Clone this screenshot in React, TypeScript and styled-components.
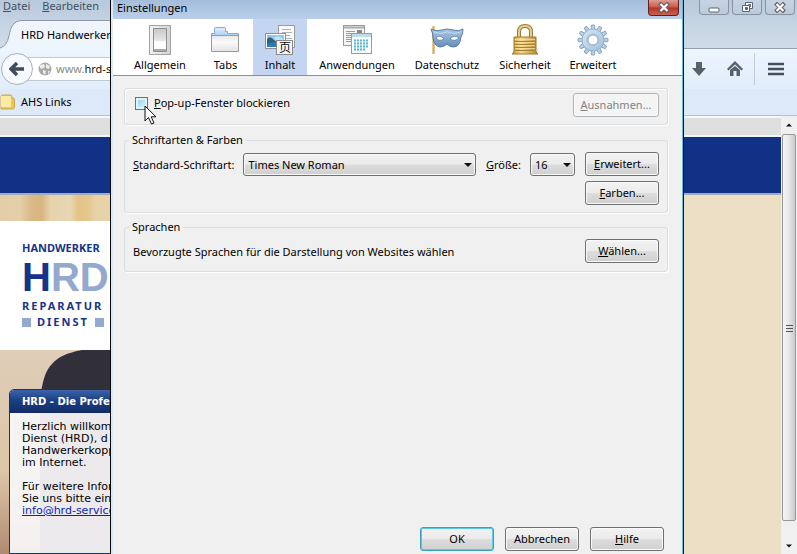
import React from "react";
import styled, { createGlobalStyle } from "styled-components";

const Global = createGlobalStyle`
  * { box-sizing: border-box; }
  html, body, #root { height: 100%; margin: 0; }
  body { overflow: hidden; font: 11px/16px "Noto Sans", "Open Sans", sans-serif; color: #000; }
  button, input, select { font: inherit; color: inherit; }
`;

/* ---------- browser window ---------- */

const Browser = styled.div`
  position: relative;
  display: flex;
  flex-direction: column;
  height: 100vh;
  overflow: hidden;
  background: #dce9f8;
`;

const TitleBar = styled.header`
  display: flex;
  flex-direction: column;
  justify-content: space-between;
  height: 49px;
  background: linear-gradient(#b7c9dc, #c8d6e4 60%, #cfdbe7);
  border-bottom: 1px solid #93a1b1;
`;

const MenuRow = styled.div`
  display: flex;
  justify-content: space-between;
  align-items: flex-start;
  height: 16px;
  padding: 0 2px 0 3px;
`;

const Menu = styled.nav`
  display: flex;
  gap: 12px;
`;

const MenuItem = styled.button`
  padding: 0;
  border: 0;
  background: none;
  line-height: 12px;
  color: #44505e;
`;

const WindowButtons = styled.div`
  display: flex;
  gap: 3px;
`;

const WindowButton = styled.button`
  display: grid;
  place-items: center;
  width: 30px;
  height: 15px;
  padding: 0;
  border: 1px solid #8793a3;
  border-top: 0;
  border-radius: 0 0 4px 4px;
  background: linear-gradient(#c5d3e2, #bccbdc);
`;

const Tab = styled.div`
  display: flex;
  align-items: flex-end;
  height: 29px;
  margin-bottom: -1px;
`;

const TabTitle = styled.span`
  width: 180px;
  height: 29px;
  border-top: 1px solid #8c99a8;
  background: linear-gradient(#f0f5fb, #ecf4fd);
  line-height: 28px;
`;

const NavBar = styled.div`
  display: flex;
  align-items: center;
  height: 40px;
  padding-right: 13px;
  background: linear-gradient(#edf5fd, #e1edfa);
`;

const BackButton = styled.button`
  z-index: 1;
  display: grid;
  place-items: center;
  width: 32px;
  height: 32px;
  margin-left: 1px;
  padding: 0;
  border: 1px solid #a6b2c1;
  border-radius: 50%;
  background: #f6f9fd;
`;

const Address = styled.label`
  display: flex;
  flex: 1;
  align-items: center;
  gap: 4px;
  height: 24px;
  margin: 0 160px 0 -8px;
  padding-left: 12px;
  border: 1px solid #c0cad6;
  background: #fff;
  color: #8a8a8a;
  b { color: #111; font-weight: 400; }
`;

const NavIcons = styled.div`
  display: flex;
  align-items: center;
  gap: 20px;
`;

const NavButton = styled.button`
  display: grid;
  padding: 0;
  border: 0;
  background: none;
`;

const Divider = styled.span`
  width: 1px;
  height: 32px;
  margin: 0 -7px 0 -9px;
  background: #bccadb;
`;

const Bookmarks = styled.div`
  display: flex;
  align-items: center;
  height: 27px;
  border-bottom: 1px solid #b3c0d0;
  background: #dde9f8;
`;

const BookmarkLink = styled.a`
  display: flex;
  align-items: center;
  gap: 6px;
  color: inherit;
  text-decoration: none;
`;

const Viewport = styled.div`
  display: flex;
  flex: 1;
  min-height: 0;
`;

const Site = styled.main`
  display: flex;
  flex: 1;
  flex-direction: column;
  overflow: hidden;
  background: #eddfc5;
`;

const Strip = styled.div`
  height: 21px;
  border-top: 2px solid #f6f7f8;
  border-bottom: 2px solid #f4f5f6;
  background: #dedede;
`;

const Banner = styled.div`
  height: 58px;
  border-bottom: 2px solid #a8a9b8;
  background: #113187;
`;

const SideColumn = styled.section`
  display: flex;
  flex: 1;
  flex-direction: column;
  width: 50%;
  min-height: 0;
`;

const Curtain = styled.div`
  height: 26px;
  background: linear-gradient(90deg, #e2cda7 0, #e3cfaa 20px, #d9b886 32px, #d8b682 42px, #e6d2ac 50px, #e8d7b5 70px, #e3c387 78px, #e5c78f 88px, #e8d2a8 96px, #ead7b0);
`;

const LogoPanel = styled.div`
  display: flex;
  flex-direction: column;
  align-items: flex-start;
  height: 129px;
  padding: 19px 0 0 22px;
  background: #fff;
  color: #16338a;
  font-weight: 700;
`;

const LogoWord = styled.span<{ $tracking: number }>`
  display: flex;
  align-items: center;
  gap: 6px;
  line-height: 16px;
  letter-spacing: ${(p) => p.$tracking}px;
`;

const LogoMark = styled.strong`
  font-family: "Liberation Sans", sans-serif;
  font-size: 40px;
  line-height: 42px;
  span { color: #93a9cd; }
`;

const LogoSquare = styled.i`
  width: 9px;
  height: 9px;
  background: #93a9cd;
`;

const Photo = styled.div`
  display: grid;
  flex: 1;
  min-height: 0;
  overflow: hidden;
  > * { grid-area: 1 / 1; }
`;

const InfoBox = styled.article`
  margin: 39px 0 0 9px;
  border: 1px solid #17336f;
  border-radius: 5px 5px 0 0;
  overflow: hidden;
  background: rgba(248, 247, 248, 0.94);
  font: 11px/12px "DejaVu Sans", sans-serif;
`;

const InfoTitle = styled.h2`
  margin: 0;
  padding: 0 12px;
  background: linear-gradient(#3c64a8, #1d3f83 45%, #122c66);
  color: #fff;
  font-size: 10px;
  line-height: 23px;
`;

const InfoText = styled.p`
  margin: 0 12px 12px;
  &:first-of-type { margin-top: 8px; }
  a { color: #0b1fc4; }
`;

const ScrollBar = styled.div`
  display: flex;
  flex-direction: column;
  align-items: center;
  width: 16px;
  padding: 1px 0 0;
  background: #f0f0f1;
`;

const ScrollArrow = styled.button`
  display: grid;
  place-items: center;
  width: 16px;
  height: 16px;
  padding: 0;
  border: 0;
  background: none;
`;

const Thumb = styled.div`
  display: grid;
  flex: 1;
  place-items: center;
  width: 14px;
  margin: 1px 0 17px;
  border: 1px solid #979797;
  border-radius: 2px;
  background: linear-gradient(90deg, #f5f5f5, #e8e8ea 45%, #c9cacd);
`;

/* ---------- settings dialog ---------- */

const Dialog = styled.div`
  position: absolute;
  z-index: 2;
  top: 0;
  right: 113px;
  bottom: 0;
  left: 110px;
  display: flex;
  flex-direction: column;
  border: solid #05080c;
  border-width: 0 1px;
  background: #f0f0f0;
  box-shadow: inset 2px 0 #dfe8f3, inset -1px 0 #55c3dc;
  padding: 0 1px 0 2px;
`;

const DialogTitle = styled.div`
  display: flex;
  justify-content: space-between;
  height: 19px;
  padding: 0 3px 0 4px;
  background: linear-gradient(#a4bddb, #b9cee8);
  h1 { margin: 0; font-size: 11px; font-weight: 400; line-height: 16px; }
`;

const CloseButton = styled.button`
  display: grid;
  place-items: center;
  width: 31px;
  height: 16px;
  padding: 0;
  border: 1px solid #5f1f22;
  border-top: 0;
  border-radius: 0 0 4px 4px;
  background: linear-gradient(#dd9c91, #c9594a 48%, #b63323 52%, #cd6350);
`;

const Categories = styled.nav`
  display: grid;
  grid-template-columns: 76px 55px 54px 100px 80px 76px 60px;
  height: 57px;
  padding-left: 9px;
  border-bottom: 1px solid #8c8f94;
  background: #fff;
`;

const Category = styled.button<{ $active?: boolean }>`
  display: flex;
  flex-direction: column;
  align-items: center;
  gap: 1px;
  padding: 5px 0 0;
  border: 0;
  background: ${(p) => (p.$active ? "#c4d5f1" : "transparent")};
  white-space: nowrap;
  svg { flex: none; }
`;

const Panel = styled.form`
  display: flex;
  flex: 1;
  flex-direction: column;
  padding: 12px 14px 3px 11px;
`;

const Group = styled.fieldset`
  display: flex;
  justify-content: space-between;
  gap: 10px;
  min-width: 0;
  margin: 0 0 6px;
  padding: 4px 8px 7px;
  border: 1px solid #d8dde1;
  border-radius: 3px;
  box-shadow: 1px 1px #fff;
  legend { padding: 0 3px; margin-left: -4px; }
`;

const PlainGroup = styled(Group)`
  margin-bottom: 7px;
  padding: 4px 8px 7px 10px;
  box-shadow: inset 1px 1px #fff, 1px 1px #fff;
`;

const CheckLabel = styled.label`
  position: relative;
  display: flex;
  align-items: center;
  gap: 6px;
  height: 20px;
`;

const Check = styled.input`
  appearance: none;
  width: 13px;
  height: 13px;
  margin: 0;
  border: 1px solid #3c7fb1;
  background: linear-gradient(135deg, #8fcfea, #e8f7fd);
  box-shadow: inset 0 0 0 2px #dff3fb;
`;

const Pointer = styled.svg`
  position: absolute;
  top: 12px;
  left: 9px;
`;

const Fields = styled.div`
  display: flex;
  flex: 1;
  align-items: center;
  gap: 9px;
  height: 25px;
`;

const Picker = styled.div<{ $grow?: boolean }>`
  display: grid;
  flex: ${(p) => (p.$grow ? "1" : "0 0 45px")};
  align-items: center;
  > * { grid-area: 1 / 1; }
  svg { justify-self: end; margin-right: 4px; pointer-events: none; }
`;

const Select = styled.select`
  appearance: none;
  width: 100%;
  height: 23px;
  padding: 0 4px;
  border: 1px solid #707070;
  border-radius: 3px;
  background: linear-gradient(#f2f2f2, #ebebeb 48%, #dddddd 52%, #cfcfcf);
  box-shadow: inset 0 0 0 1px #f8f8f8;
`;

const SizeLabel = styled.label`
  margin-left: 1px;
`;

const Buttons = styled.div`
  display: flex;
  flex-direction: column;
  gap: 5px;
`;

const Button = styled.button<{ $wide?: boolean; $primary?: boolean }>`
  width: ${(p) => (p.$wide ? 86 : 74)}px;
  height: 24px;
  padding: 0;
  border: 1px solid ${(p) => (p.$primary ? "#3c9fc0" : "#707070")};
  border-radius: 3px;
  background: linear-gradient(#f3f3f3, #ebebeb 48%, #dddddd 52%, #cfcfcf);
  box-shadow: inset 0 0 0 1px ${(p) => (p.$primary ? "#5fc8e4" : "#fafafa")};
  line-height: 20px;
  white-space: nowrap;
  &:disabled { border-color: #adb2b5; background: #f4f4f4; color: #838383; }
`;

const Footer = styled.div`
  display: flex;
  justify-content: flex-end;
  gap: 11px;
  margin: auto 4px 0 0;
`;

/* ---------- drawings ---------- */

const Cross = () => (
  <svg width="12" height="11" viewBox="0 0 12 11">
    <path d="M3 2.500 9 8.500M9 2.500 3 8.500" stroke="#625c66" strokeWidth="4" strokeLinecap="square" />
    <path d="M2.500 2 9.500 9M9.500 2 2.500 9" stroke="#fff" strokeWidth="2.200" />
  </svg>
);

const Arrow = ({ up, size = 8 }: { up?: boolean; size?: number }) => (
  <svg width={size} height="4" viewBox="0 0 8 4">
    <path d={up ? "M0 4 4 0 8 4z" : "M0 0H8L4 4z"} fill="#111" />
  </svg>
);

const SwitchIcon = () => (
  <svg width="32" height="32" viewBox="0 0 32 32">
    <defs>
      <linearGradient id="sw" x2="1"><stop stopColor="#f3f3f3" /><stop offset="1" stopColor="#d4d4d4" /></linearGradient>
      <linearGradient id="sk" x2="0" y2="1"><stop stopColor="#c9c9c9" /><stop offset="1" stopColor="#e9e9e9" /></linearGradient>
    </defs>
    <rect x="5.500" y="1.500" width="21" height="29" fill="url(#sw)" stroke="#a2a2a2" />
    <rect x="9" y="4" width="14" height="24" rx="1" fill="#8f8f8f" />
    <rect x="10" y="5" width="12" height="13" fill="url(#sk)" />
    <rect x="10" y="17" width="12" height="8" fill="#fdfdfd" />
    <rect x="10" y="25" width="12" height="2" fill="#aaa" />
  </svg>
);

const FolderIcon = () => (
  <svg width="32" height="32" viewBox="0 0 32 32">
    <defs>
      <linearGradient id="fb" x2="0" y2="1"><stop stopColor="#e6e6e6" /><stop offset=".4" stopColor="#fafafa" /><stop offset="1" stopColor="#e4e4e4" /></linearGradient>
      <linearGradient id="ft" x2="0" y2="1"><stop stopColor="#e2f0fe" /><stop offset="1" stopColor="#a9cdf4" /></linearGradient>
    </defs>
    <path d="M1.500 9.500H4.500V4.500Q4.500 3.500 5.500 3.500H14.500Q15.500 3.500 15.500 4.500V7.500H17.500V9.500H28.500V12H1.500z" fill="url(#ft)" stroke="#83a9d3" />
    <path d="M1.500 27.500V11.500H28.500V27.500z" fill="url(#fb)" stroke="#9b9b9b" />
  </svg>
);

const ContentIcon = () => (
  <svg width="32" height="32" viewBox="0 0 32 32">
    <rect x="14.500" y="1.500" width="16" height="22" fill="#fafafa" stroke="#9c9c9c" />
    <path d="M18 5.500H27M18 8.500H28M18 11.500H26M22 14.500H28" stroke="#aeb3b8" />
    <rect x="1.500" y="9.500" width="20" height="15" fill="#fff" stroke="#8b9196" />
    <path d="M3 11H20V23H3z" fill="#8fcaf3" />
    <path d="M3 15Q6 11 10 16L15 20 20 21V23H3z" fill="#2f6272" />
    <path d="M3 20 10 18 20 21V23H3z" fill="#2f78b9" />
    <path d="M10 14Q13 11 18 14L20 17V20L14 19z" fill="#bee5fd" />
    <rect x="12.500" y="16.500" width="16" height="14" fill="#f6f6f6" stroke="#8a8a8a" />
    <text x="15" y="28" fontFamily="Noto Sans CJK SC, sans-serif" fontSize="12" fill="#111">页</text>
  </svg>
);

const AppsIcon = () => (
  <svg width="32" height="32" viewBox="0 0 32 32">
    <rect x="2.500" y="1.500" width="21" height="20" fill="#f5f5f5" stroke="#999" />
    <path d="M3 3.500H23" stroke="#aaa" strokeWidth="2" />
    <path d="M5 7.500H14M5 9.500H13M5 11.500H14M5 13.500H13M5 15.500H11M5 17.500H13" stroke="#9a9a9a" />
    <rect x="16" y="6" width="5" height="6" fill="#888" />
    <rect x="10.500" y="9.500" width="20" height="20" fill="#f7fcfe" stroke="#969c9f" />
    <path d="M11 11.500H30" stroke="#bddde7" strokeWidth="3" />
    <path d="M13 16.500H28M13 19.500H28M13 22.500H28M13 25.500H25" stroke="#55b5d2" strokeWidth="2" strokeDasharray="2 1" />
  </svg>
);

const MaskIcon = () => (
  <svg width="34" height="32" viewBox="0 0 34 32">
    <defs><linearGradient id="mk" x2="0" y2="1"><stop stopColor="#a9c8e6" /><stop offset="1" stopColor="#678eb9" /></linearGradient></defs>
    <path d="M3.500 2V30" stroke="#bb8e2e" strokeWidth="2" />
    <path d="M3 2V30" stroke="#ead18a" />
    <path d="M1 5Q6 8 12 6Q17 4 23 6Q29 8 33 5Q33 10 31 13Q30 23 23 23Q20 23 17 20Q14 23 10 23Q4 22 3 14Q3 9 1 5z" fill="url(#mk)" stroke="#587ba1" />
    <path d="M6 14Q10 10 14 15Q9 18 6 14zM20 15Q24 10 29 14Q25 18 20 15z" fill="#fff" stroke="#58789a" strokeWidth=".7" />
    <path d="M4 8Q11 11 17 8Q24 11 31 8" fill="none" stroke="#c5daef" />
  </svg>
);

const LockIcon = () => (
  <svg width="32" height="32" viewBox="0 0 32 32">
    <defs><linearGradient id="lk" x2="1"><stop stopColor="#c09434" /><stop offset=".35" stopColor="#f4dc8f" /><stop offset="1" stopColor="#b7862a" /></linearGradient></defs>
    <path d="M10 13V8Q10 2 16 2Q22 2 22 8V13" fill="none" stroke="#9e7c33" strokeWidth="4" />
    <path d="M10 13V8Q10 2 16 2Q22 2 22 8V13" fill="none" stroke="#e4ce91" strokeWidth="2" />
    <path d="M5 13H27V28L29 30H3L5 28z" fill="url(#lk)" stroke="#a0782a" />
    <path d="M5 17.500H27M5 20.500H27M5 23.500H27M5 26.500H27" stroke="#aa8130" />
    <path d="M6 15.500H26M6 18.500H26M6 21.500H26M6 24.500H26" stroke="#f7e6aa" opacity=".7" />
  </svg>
);

const GearIcon = () => (
  <svg width="32" height="32" viewBox="0 0 32 32">
    <defs><linearGradient id="gr" x2="1" y2="1"><stop stopColor="#d9e8f5" /><stop offset="1" stopColor="#a0bfdb" /></linearGradient></defs>
    {Array.from({ length: 12 }, (_, i) => (
      <path key={i} d="M14 6 14.500 1H17.500L18 6z" transform={`rotate(${i * 30} 16 16)`} fill="#b8d0e5" stroke="#7899b7" strokeWidth=".8" />
    ))}
    <circle cx="16" cy="16" r="11" fill="url(#gr)" stroke="#85a5c2" strokeWidth=".7" />
    <circle cx="16" cy="16" r="7" fill="#b4cce1" />
    <circle cx="16" cy="16" r="5" fill="#fff" stroke="#8ca8c2" />
  </svg>
);

const categories = [
  { name: "Allgemein", Icon: SwitchIcon },
  { name: "Tabs", Icon: FolderIcon },
  { name: "Inhalt", Icon: ContentIcon, active: true },
  { name: "Anwendungen", Icon: AppsIcon },
  { name: "Datenschutz", Icon: MaskIcon },
  { name: "Sicherheit", Icon: LockIcon },
  { name: "Erweitert", Icon: GearIcon },
];

const BrowserChrome = () => (
  <>
    <TitleBar>
      <MenuRow>
        <Menu>
          <MenuItem><u>D</u>atei</MenuItem>
          <MenuItem><u>B</u>earbeiten</MenuItem>
        </Menu>
        <WindowButtons>
          <WindowButton aria-label="Minimieren">
            <svg width="12" height="11"><rect x="1" y="6" width="10" height="4" rx="1" fill="#fff" stroke="#596371" /></svg>
          </WindowButton>
          <WindowButton aria-label="Verkleinern">
            <svg width="12" height="12" fill="#fff" stroke="#596371"><path d="M4.500 1.500H11.500V7.500H4.500zM7.500 3.500H9.500V5.500H7.500z" fillRule="evenodd" /><path d="M1.500 4.500H8.500V10.500H1.500zM4.500 6.500H6.500V8.500H4.500z" fillRule="evenodd" /></svg>
          </WindowButton>
          <WindowButton aria-label="Schließen"><Cross /></WindowButton>
        </WindowButtons>
      </MenuRow>
      <Tab>
        <svg width="21" height="29">
          <path d="M0 29V28Q7 26 9 16Q11 1 21 .5V29z" fill="#eff5fc" />
          <path d="M0 28Q7 26 9 16Q11 1 21 .5" fill="none" stroke="#8c99a8" />
        </svg>
        <TabTitle>HRD Handwerker</TabTitle>
      </Tab>
    </TitleBar>
    <NavBar>
      <BackButton aria-label="Zurück">
        <svg width="16" height="14"><path d="M15 7H3M8 1 2 7 8 13" fill="none" stroke="#424c58" strokeWidth="3.500" /></svg>
      </BackButton>
      <Address>
        <svg width="14" height="14">
          <circle cx="7" cy="7" r="6.500" fill="#a8a8a8" />
          <path d="M2 3 6 2 7 5 4 7 2 6zM8 2 12 4 11 7 8 6zM5 8 8 9 7 13 5 11zM10 9 12 9 10 12z" fill="#ededed" />
        </svg>
        <span>www.<b>hrd-s</b></span>
      </Address>
      <NavIcons>
        <NavButton aria-label="Downloads">
          <svg width="16" height="16"><path d="M5 1H11V7H15L8 15 1 7H5z" fill="#56616e" /></svg>
        </NavButton>
        <NavButton aria-label="Startseite">
          <svg width="16" height="16"><path d="M8 0 16 8 14.500 9.500 8 3.500 1.500 9.500 0 8zM3 9 8 5 13 9V15H9.500V10H6.500V15H3z" fill="#56616e" /></svg>
        </NavButton>
        <Divider />
        <NavButton aria-label="Menü">
          <svg width="16" height="14"><path d="M0 2H16M0 7H16M0 12H16" stroke="#454f5b" strokeWidth="2.500" /></svg>
        </NavButton>
      </NavIcons>
    </NavBar>
    <Bookmarks>
      <BookmarkLink href="#ahs">
        <svg width="15" height="16">
          <path d="M1 2.500Q1 1 3 1H10Q12 1 12 3V4H13Q14.500 4 14.500 6V13Q14.500 15 12 15H1z" fill="#e9c75c" stroke="#cda74a" />
          <path d="M1 2H11V13H1z" fill="#fbeaa1" />
        </svg>
        <span>AHS Links</span>
      </BookmarkLink>
    </Bookmarks>
  </>
);

const Website = () => (
  <Viewport>
    <Site>
      <Strip />
      <Banner />
      <SideColumn>
        <Curtain />
        <LogoPanel>
          <LogoWord $tracking={0}>HANDWERKER</LogoWord>
          <LogoMark>H<span>RD</span></LogoMark>
          <LogoWord $tracking={2}>REPARATUR</LogoWord>
          <LogoWord $tracking={2}><LogoSquare />DIENST<LogoSquare /></LogoWord>
        </LogoPanel>
        <Photo>
          <svg width="400" height="204">
            <defs><linearGradient id="wall" x2="0" y2="1"><stop stopColor="#dfcdb8" /><stop offset=".6" stopColor="#ddc5a8" /><stop offset="1" stopColor="#b18a72" /></linearGradient></defs>
            <rect width="400" height="204" fill="url(#wall)" />
            <path d="M40 50Q43 22 52 14Q60 4 82 0H400V204H40z" fill="#302f3a" />
          </svg>
          <InfoBox>
            <InfoTitle>HRD - Die Profes</InfoTitle>
            <InfoText>Herzlich willkom<br />Dienst (HRD), d<br />Handwerkerkopp<br />im Internet.</InfoText>
            <InfoText>Für weitere Infor<br />Sie uns bitte ein<br /><a href="#mail">info@hrd-service</a></InfoText>
          </InfoBox>
        </Photo>
      </SideColumn>
    </Site>
    <ScrollBar>
      <ScrollArrow aria-label="Nach oben"><Arrow up size={6} /></ScrollArrow>
      <Thumb><svg width="7" height="8"><path d="M0 1.500H7M0 4.500H7M0 7.500H7" stroke="#555" /></svg></Thumb>
      <ScrollArrow aria-label="Nach unten"><Arrow size={6} /></ScrollArrow>
    </ScrollBar>
  </Viewport>
);

const Settings = () => (
  <Dialog role="dialog" aria-labelledby="settings-title">
    <DialogTitle>
      <h1 id="settings-title">Einstellungen</h1>
      <CloseButton aria-label="Schließen"><Cross /></CloseButton>
    </DialogTitle>
    <Categories>
      {categories.map(({ name, Icon, active }) => (
        <Category key={name} $active={active} aria-current={active ? "page" : undefined}>
          <Icon />
          {name}
        </Category>
      ))}
    </Categories>
    <Panel onSubmit={(e) => e.preventDefault()}>
      <PlainGroup>
        <CheckLabel>
          <Check type="checkbox" />
          <span><u>P</u>op-up-Fenster blockieren</span>
          <Pointer width="14" height="21" viewBox="0 0 14 21">
            <path d="M1 1V16L4.500 12.500 7.500 19 10 18 7.200 11.800H12z" fill="#fff" stroke="#111" />
          </Pointer>
        </CheckLabel>
        <Button type="button" $wide disabled><u>A</u>usnahmen...</Button>
      </PlainGroup>
      <Group>
        <legend>Schriftarten &amp; Farben</legend>
        <Fields>
          <label htmlFor="font"><u>S</u>tandard-Schriftart:</label>
          <Picker $grow>
            <Select id="font"><option>Times New Roman</option></Select>
            <Arrow />
          </Picker>
          <SizeLabel htmlFor="size"><u>G</u>röße:</SizeLabel>
          <Picker>
            <Select id="size"><option>16</option></Select>
            <Arrow />
          </Picker>
        </Fields>
        <Buttons>
          <Button type="button"><u>E</u>rweitert...</Button>
          <Button type="button"><u>F</u>arben...</Button>
        </Buttons>
      </Group>
      <Group>
        <legend>Sprachen</legend>
        <Fields>Bevorzugte Sprachen für die Darstellung von Websites wählen</Fields>
        <Button type="button"><u>W</u>ählen...</Button>
      </Group>
      <Footer>
        <Button $primary>OK</Button>
        <Button type="button">Abbrechen</Button>
        <Button type="button"><u>H</u>ilfe</Button>
      </Footer>
    </Panel>
  </Dialog>
);

export default function App() {
  return (
    <>
      <Global />
      <Browser>
        <BrowserChrome />
        <Website />
        <Settings />
      </Browser>
    </>
  );
}
